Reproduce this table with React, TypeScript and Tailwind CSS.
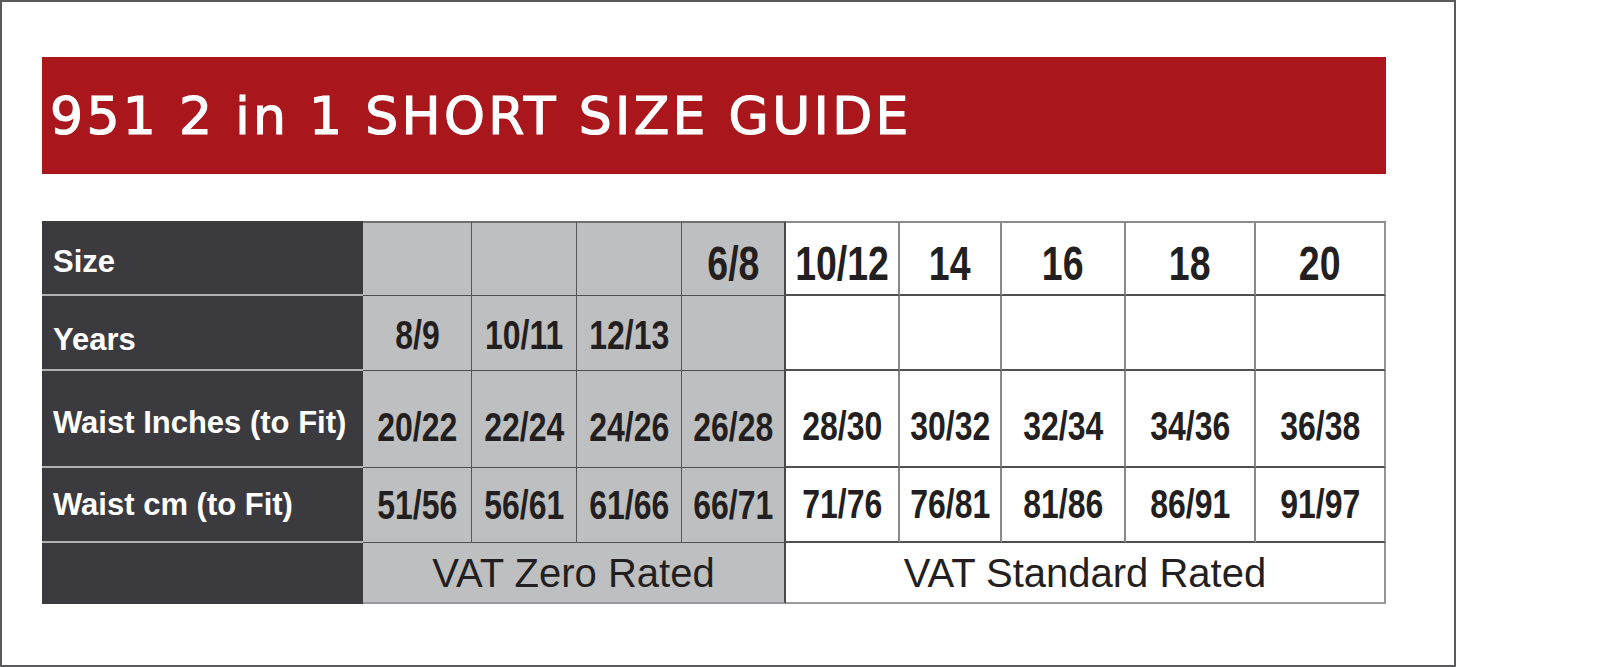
const rows = [
  {
    label: 'Size',
    young: ['', '', '', '6/8'],
    adult: ['10/12', '14', '16', '18', '20'],
    big: true,
    labelPad: 'pt-[8px]',
    valuePad: 'pt-[10px]',
  },
  {
    label: 'Years',
    young: ['8/9', '10/11', '12/13', ''],
    adult: ['', '', '', '', ''],
    big: false,
    labelPad: 'pt-[14px]',
    valuePad: 'pt-[4px]',
  },
  {
    label: 'Waist Inches (to Fit)',
    young: ['20/22', '22/24', '24/26', '26/28'],
    adult: ['28/30', '30/32', '32/34', '34/36', '36/38'],
    big: false,
    labelPad: 'pt-[8px]',
    valuePad: 'pt-[16px]',
  },
  {
    label: 'Waist cm (to Fit)',
    young: ['51/56', '56/61', '61/66', '66/71'],
    adult: ['71/76', '76/81', '81/86', '86/91', '91/97'],
    big: false,
    labelPad: 'pt-0',
    valuePad: 'pt-0',
  },
];

function Value({ text, big }: { text: string; big: boolean }) {
  if (!text) return null;
  return (
    <span
      className={`inline-block scale-x-[0.78] font-bold leading-none text-[#231f20] ${
        big ? 'text-[48px]' : 'text-[41px]'
      }`}
    >
      {text}
    </span>
  );
}

export default function App() {
  return (
    <div className="bg-white w-[1612px] h-[667px] font-['Liberation_Sans',Arial,sans-serif]">
      <div className="w-[1456px] h-[667px] border-2 border-[#5a5a5c] pl-[40px] pt-[55px]">
        {/* Title band */}
        <div className="w-[1344px] h-[117px] bg-[#a9161c] flex items-center pl-[8px]">
          <h1 className="text-white text-[52px] leading-none tracking-[3.3px] font-['DejaVu_Sans',sans-serif] font-normal [-webkit-text-stroke:1.2px_white]">
            951 2 in 1 SHORT SIZE GUIDE
          </h1>
        </div>

        {/* Size table */}
        <div className="mt-[47px] w-[1344px] grid grid-cols-[321px_109px_105px_105px_104px_114px_102px_124px_130px_130px] grid-rows-[75px_75px_97px_75px_61px]">
          {rows.map((row, r) => (
            <div key={row.label} className="contents">
              <div
                className={`bg-[#3b3a3f] border-b-2 border-[#b1b1b3] flex items-center pl-[11px] text-white font-bold text-[31px] leading-none ${row.labelPad}`}
              >
                {row.label}
              </div>
              {row.young.map((v, i) => (
                <div
                  key={'y' + i}
                  className={`bg-[#bebfc1] border-b border-b-[#4f4f51] flex items-center justify-center ${
                    i === 3 ? 'border-r-2 border-r-[#4a4a4c]' : 'border-r border-r-[#58585a]'
                  } ${r === 0 ? 'border-t-2 border-t-[#707072]' : ''} ${row.valuePad}`}
                >
                  <Value text={v} big={row.big} />
                </div>
              ))}
              {row.adult.map((v, i) => (
                <div
                  key={'a' + i}
                  className={`bg-white border-b-2 border-b-[#505052] flex items-center justify-center ${
                    i === 4 ? 'border-r-2 border-r-[#949496]' : 'border-r-2 border-r-[#8a8a8c]'
                  } ${r === 0 ? 'border-t-2 border-t-[#8a8a8c]' : ''} ${row.valuePad}`}
                >
                  <Value text={v} big={row.big} />
                </div>
              ))}
            </div>
          ))}

          {/* VAT row */}
          <div className="bg-[#3b3a3f]" />
          <div className="col-span-4 bg-[#bebfc1] border-r-2 border-r-[#4a4a4c] border-b-2 border-b-[#9a9a9c] flex items-center justify-center text-[40px] leading-none text-[#231f20]">
            VAT Zero Rated
          </div>
          <div className="col-span-5 bg-white border-r-2 border-r-[#949496] border-b-2 border-b-[#9a9a9c] flex items-center justify-center text-[40px] leading-none text-[#231f20]">
            VAT Standard Rated
          </div>
        </div>
      </div>
    </div>
  );
}
